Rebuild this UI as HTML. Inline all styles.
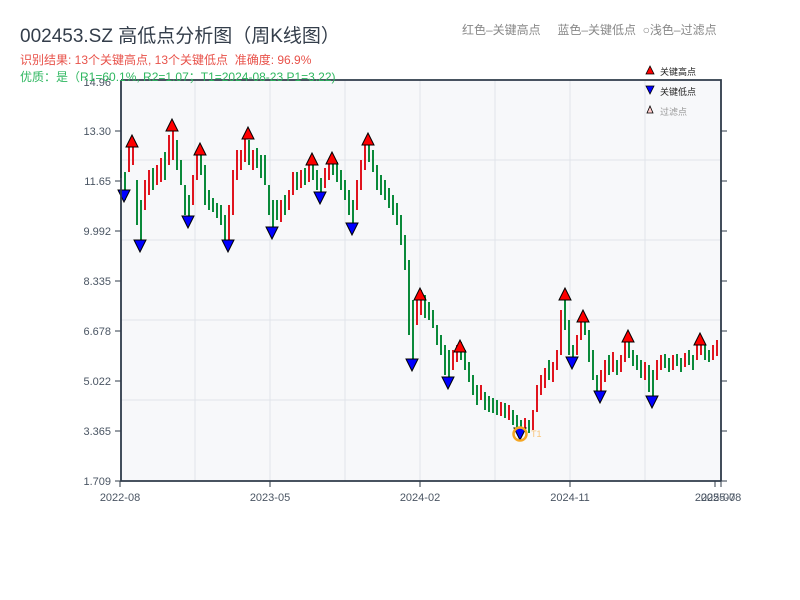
<!DOCTYPE html>
<html><head><meta charset="utf-8"><style>
body{margin:0;width:800px;height:600px;background:#fff;overflow:hidden;font-family:"Liberation Sans","Noto Sans CJK SC",sans-serif;}
.t{position:absolute;white-space:nowrap}
</style></head><body>
<svg width="800" height="600" style="position:absolute;left:0;top:0" xmlns="http://www.w3.org/2000/svg" font-family="Liberation Sans, Noto Sans CJK SC, sans-serif">
<rect x="121" y="80" width="600" height="401" fill="#f7f8fa"/>
<path d="M195 80V481M270 80V481M345 80V481M420 80V481M495 80V481M570 80V481M645 80V481M121 160H721M121 240H721M121 320H721M121 400H721" stroke="#e1e4ea" stroke-width="1"/>
<path stroke="#0a8a3a" stroke-width="2" fill="none" d="M121 150V178M125 172V200M137 180V225M141 200V246M153 168V190M165 152V180M177 140V170M181 160V185M185 185V215M189 195V222M201 148V175M205 165V205M209 190V210M213 198V212M217 203V218M221 205V225M225 215V240M249 140V165M257 148V168M261 155V178M265 155V185M269 185V215M273 200V228M277 200V220M285 195V215M297 172V190M305 168V185M313 158V180M317 170V190M321 178V198M333 156V175M337 162V182M341 170V190M345 180V200M349 190V215M353 200V228M369 140V162M373 150V172M377 165V190M381 175V195M385 180V200M389 188V208M393 195V215M397 203V225M401 215V245M405 235V270M409 260V335M413 300V360M425 295V318M429 302V320M433 310V328M437 325V345M441 335V355M445 345V375M449 350V378M461 342V360M465 350V370M469 362V382M473 375V395M477 385V405M485 392V410M489 396V412M493 398V413M497 400V415M505 403V418M513 410V425M517 415V432M521 420V436M529 420V433M549 360V380M565 300V330M569 320V355M573 345V362M585 318V335M589 330V362M593 350V380M597 375V395M609 355V375M617 360V375M629 340V358M633 350V366M637 355V370M641 360V378M649 365V392M653 370V400M665 354V368M669 358V372M677 354V366M681 358V372M689 350V365M693 355V370M705 345V360M709 350V362"/>
<path stroke="#e0141e" stroke-width="2" fill="none" d="M129 145V172M133 140V165M145 180V210M149 170V195M157 165V185M161 158V182M169 135V165M173 125V160M193 175V205M197 150V180M229 205V240M233 170V215M237 150V180M241 150V170M245 138V162M253 150V170M281 200V222M289 190V210M293 172V195M301 170V188M309 162V182M325 168V188M329 160V180M357 180V210M361 160V190M365 145V170M417 295V325M421 290V315M453 350V370M457 345V362M481 385V400M501 402V416M509 405V420M525 418V432M533 410V430M537 385V412M541 375V395M545 368V388M553 362V382M557 350V370M561 310V355M577 335V355M581 320V340M601 370V392M605 360V382M613 352V372M621 355V372M625 342V362M645 362V380M657 360V380M661 355V370M673 355V370M685 353V367M697 342V360M701 338V355M713 345V360M717 340V356"/>
<g fill="#f00" stroke="#000" stroke-width="1">
<polygon points="132,135 126,147 138,147"/><polygon points="172,119 166,131 178,131"/><polygon points="200,143 194,155 206,155"/><polygon points="248,127 242,139 254,139"/><polygon points="312,153 306,165 318,165"/><polygon points="332,152 326,164 338,164"/><polygon points="368,133 362,145 374,145"/><polygon points="420,288 414,300 426,300"/><polygon points="460,340 454,352 466,352"/><polygon points="565,288 559,300 571,300"/><polygon points="583,310 577,322 589,322"/><polygon points="628,330 622,342 634,342"/><polygon points="700,333 694,345 706,345"/>
</g>
<g fill="#00f" stroke="#000" stroke-width="1">
<polygon points="124,202 118,190 130,190"/><polygon points="140,252 134,240 146,240"/><polygon points="188,228 182,216 194,216"/><polygon points="228,252 222,240 234,240"/><polygon points="272,239 266,227 278,227"/><polygon points="320,204 314,192 326,192"/><polygon points="352,235 346,223 358,223"/><polygon points="412,371 406,359 418,359"/><polygon points="448,389 442,377 454,377"/><polygon points="520,440 514,428 526,428"/><polygon points="572,369 566,357 578,357"/><polygon points="600,403 594,391 606,391"/><polygon points="652,408 646,396 658,396"/>
</g>
<circle cx="520" cy="434" r="6.5" fill="none" stroke="#f5a623" stroke-width="2.5"/>
<text x="531" y="437" font-size="9" fill="#f8c57a">T1</text>
<path d="M121 80H721V481M121 80V481H721" stroke="#2f3b4a" stroke-width="1.8" fill="none"/>
<path d="M115 131H121M115 181H121M115 231H121M115 281H121M115 331H121M115 381H121M115 431H121M115 481H121M721 131H727M721 181H727M721 231H727M721 281H727M721 331H727M721 381H727M721 431H727M721 481H727M120 481V487M270 481V487M420 481V487M570 481V487M715 481V487M721 481V487" stroke="#2f3b4a" stroke-width="1"/>
<g font-size="11" fill="#4a5563" text-anchor="end">
<text x="111" y="86">14.96</text><text x="111" y="135">13.30</text><text x="111" y="185">11.65</text><text x="111" y="235">9.992</text><text x="111" y="285">8.335</text><text x="111" y="335">6.678</text><text x="111" y="385">5.022</text><text x="111" y="435">3.365</text><text x="111" y="485">1.709</text>
</g>
<g font-size="11" fill="#4a5563" text-anchor="middle">
<text x="120" y="501">2022-08</text><text x="270" y="501">2023-05</text><text x="420" y="501">2024-02</text><text x="570" y="501">2024-11</text><text x="715" y="501">2025-07</text><text x="721" y="501">2025-08</text>
</g>
<polygon points="650,66 646,74 654,74" fill="#f00" stroke="#000" stroke-width=".8"/><text x="660" y="75" font-size="9" fill="#222">关键高点</text>
<polygon points="650,94 646,86 654,86" fill="#00f" stroke="#000" stroke-width=".8"/><text x="660" y="95" font-size="9" fill="#222">关键低点</text>
<polygon points="650,106 647,113 653,113" fill="#fcc" stroke="#000" stroke-width=".8"/><text x="660" y="115" font-size="9" fill="#999">过滤点</text>
</svg>
<div class="t" style="left:20px;top:21px;font-size:19px;color:#333d4a">002453.SZ 高低点分析图（周K线图）</div>
<div class="t" style="left:20px;top:51px;font-size:12px;color:#e8524a">识别结果: 13个关键高点, 13个关键低点 &nbsp;准确度: 96.9%</div>
<div class="t" style="left:20px;top:68px;font-size:12px;color:#2fb760">优质：是（R1=60.1%, R2=1.07；T1=2024-08-23 P1=3.22)</div>
<div class="t" style="left:462px;top:21px;font-size:12px;color:#888">红色–关键高点 &nbsp;&nbsp;&nbsp;&nbsp;蓝色–关键低点 &nbsp;○浅色–过滤点</div>
</body></html>
